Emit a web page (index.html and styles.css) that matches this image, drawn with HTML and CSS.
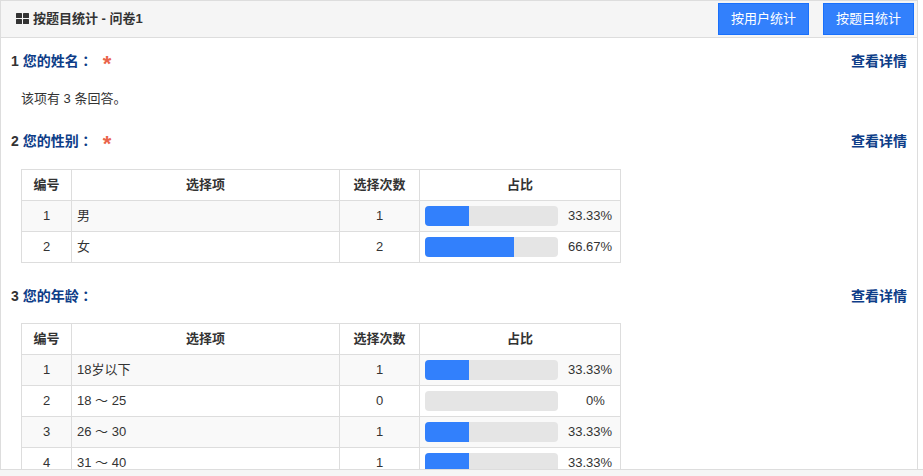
FILE: index.html
```html
<!doctype html>
<html lang="zh-CN">
	<head>
		<meta charset="UTF-8" />
		<meta name="viewport" content="width=device-width, initial-scale=1.0" />
		<title>按题目统计 - 问卷1</title>
		<link rel="stylesheet" href="styles.css">
	</head>
	<body>
		<div class="frame">
			<main class="panel">
				<header class="panel-head">
					<h1 class="panel-title">
						<svg class="icon" viewBox="0 0 14 12" width="14" height="12" aria-hidden="true">
							<rect x="0" y="0" width="6" height="5" rx="0.5" />
							<rect x="7" y="0" width="6" height="5" rx="0.5" />
							<rect x="0" y="6" width="6" height="5" rx="0.5" />
							<rect x="7" y="6" width="6" height="5" rx="0.5" />
						</svg>
						按题目统计 - 问卷1
					</h1>
					<div class="actions">
						<button type="button" class="btn">按用户统计</button>
						<button type="button" class="btn">按题目统计</button>
					</div>
				</header>

				<section class="question">
					<div class="question-head">
						<h2>1 <span class="blue">您的姓名<span class="colon" lang="zh-TW">：</span></span><span class="required">*</span></h2>
						<a href="#" class="blue">查看详情</a>
					</div>
					<p class="summary">该项有 3 条回答。</p>
				</section>

				<section class="question">
					<div class="question-head">
						<h2>2 <span class="blue">您的性别<span class="colon" lang="zh-TW">：</span></span><span class="required">*</span></h2>
						<a href="#" class="blue">查看详情</a>
					</div>
					<table class="stats">
						<thead>
							<tr>
								<th class="col-no">编号</th>
								<th class="col-option">选择项</th>
								<th class="col-count">选择次数</th>
								<th class="col-ratio">占比</th>
							</tr>
						</thead>
						<tbody>
							<tr>
								<td>1</td>
								<td class="option">男</td>
								<td>1</td>
								<td>
									<div class="ratio">
										<div class="bar"><div class="bar-fill" style="width: 33.33%"></div></div>
										<span class="percent">33.33%</span>
									</div>
								</td>
							</tr>
							<tr>
								<td>2</td>
								<td class="option">女</td>
								<td>2</td>
								<td>
									<div class="ratio">
										<div class="bar"><div class="bar-fill" style="width: 66.67%"></div></div>
										<span class="percent">66.67%</span>
									</div>
								</td>
							</tr>
						</tbody>
					</table>
				</section>

				<section class="question">
					<div class="question-head">
						<h2>3 <span class="blue">您的年龄<span class="colon" lang="zh-TW">：</span></span></h2>
						<a href="#" class="blue">查看详情</a>
					</div>
					<table class="stats">
						<thead>
							<tr>
								<th class="col-no">编号</th>
								<th class="col-option">选择项</th>
								<th class="col-count">选择次数</th>
								<th class="col-ratio">占比</th>
							</tr>
						</thead>
						<tbody>
							<tr>
								<td>1</td>
								<td class="option">18岁以下</td>
								<td>1</td>
								<td>
									<div class="ratio">
										<div class="bar"><div class="bar-fill" style="width: 33.33%"></div></div>
										<span class="percent">33.33%</span>
									</div>
								</td>
							</tr>
							<tr>
								<td>2</td>
								<td class="option">18 ～ 25</td>
								<td>0</td>
								<td>
									<div class="ratio">
										<div class="bar"><div class="bar-fill" style="width: 0%"></div></div>
										<span class="percent">&nbsp;&nbsp;&nbsp;0%</span>
									</div>
								</td>
							</tr>
							<tr>
								<td>3</td>
								<td class="option">26 ～ 30</td>
								<td>1</td>
								<td>
									<div class="ratio">
										<div class="bar"><div class="bar-fill" style="width: 33.33%"></div></div>
										<span class="percent">33.33%</span>
									</div>
								</td>
							</tr>
							<tr>
								<td>4</td>
								<td class="option">31 ～ 40</td>
								<td>1</td>
								<td>
									<div class="ratio">
										<div class="bar"><div class="bar-fill" style="width: 33.33%"></div></div>
										<span class="percent">33.33%</span>
									</div>
								</td>
							</tr>
						</tbody>
					</table>
				</section>
			</main>
		</div>
	</body>
</html>
```
FILE: styles.css
```css
:root {
	--color-text: #333333;
	--color-border: #dddddd;
	--color-head: #f5f5f5;
	--color-primary: #3280fc;
	--color-link: #0d3d88;
	--color-red: #ea644a;
}

* {
	box-sizing: border-box;
}

body {
	display: flex;
	flex-direction: column;
	height: 100vh;
	margin: 0;
	padding-bottom: 6px;

	background-color: var(--color-head);
	color: var(--color-text);

	font-family: 'Liberation Sans', 'Noto Sans CJK SC', sans-serif;
	font-size: 13px;
	line-height: 20px;
}

h1,
h2,
p {
	margin: 0;
}

a {
	text-decoration: none;
}

/* Scrolling frame */

.frame {
	flex: 1;
	min-height: 0;
	padding-right: 5px;
	overflow: hidden;

	border-bottom: 1px solid var(--color-border);
	background-color: #ffffff;
}

.panel {
	border: 1px solid var(--color-border);
}

.panel-head {
	display: flex;
	align-items: center;
	justify-content: space-between;
	padding: 2px 3px 2px 15px;

	border-bottom: 1px solid var(--color-border);
	background-color: var(--color-head);
}

.panel-title {
	display: flex;
	align-items: center;
	gap: 3px;

	font-size: 13px;
	line-height: 20px;
}

.icon {
	fill: var(--color-text);
}

.actions {
	display: flex;
	gap: 14px;
}

.btn {
	padding: 5px 12px;

	border: 1px solid #1970fc;
	background-color: var(--color-primary);
	color: #ffffff;

	font: inherit;
	cursor: pointer;
}

/* Questions */

.question {
	padding: 13px 10px 0;
}

.question + .question {
	padding-top: 23px;
}

.question-head {
	display: flex;
	justify-content: space-between;

	font-size: 14px;
	font-weight: 700;
	line-height: 20px;
}

h2 {
	display: flex;
	gap: 4px;

	font-size: 14px;
}

.blue {
	color: var(--color-link);
}

/* Centred full-width colon */
.colon {
	font-family: 'Noto Sans CJK TC', sans-serif;
	line-height: 1;
}

.required {
	height: 21px;
	margin-left: 6px;

	color: var(--color-red);

	font-size: 22px;
	line-height: 26px;
}

.summary {
	padding: 18px 10px 0;

	line-height: 18px;
}

.stats {
	width: 600px;
	max-width: 100%;
	margin: 17px 0 0 10px;

	border-collapse: collapse;
	table-layout: fixed;
}

.stats th,
.stats td {
	padding: 5px;

	border: 1px solid var(--color-border);
	text-align: center;
}

.stats tbody tr:nth-child(odd) {
	background-color: #f9f9f9;
}

.stats .option {
	text-align: left;
}

.col-no {
	width: 50px;
}

.col-count {
	width: 80px;
}

.col-ratio {
	width: 201px;
}

.ratio {
	display: flex;
}

.bar {
	width: 133px;
	height: 20px;
	overflow: hidden;

	border-radius: 4px;
	background-color: #e5e5e5;
}

.bar-fill {
	height: 100%;

	background-color: var(--color-primary);
}

.percent {
	flex: 1;
	padding-left: 7px;
}
```
